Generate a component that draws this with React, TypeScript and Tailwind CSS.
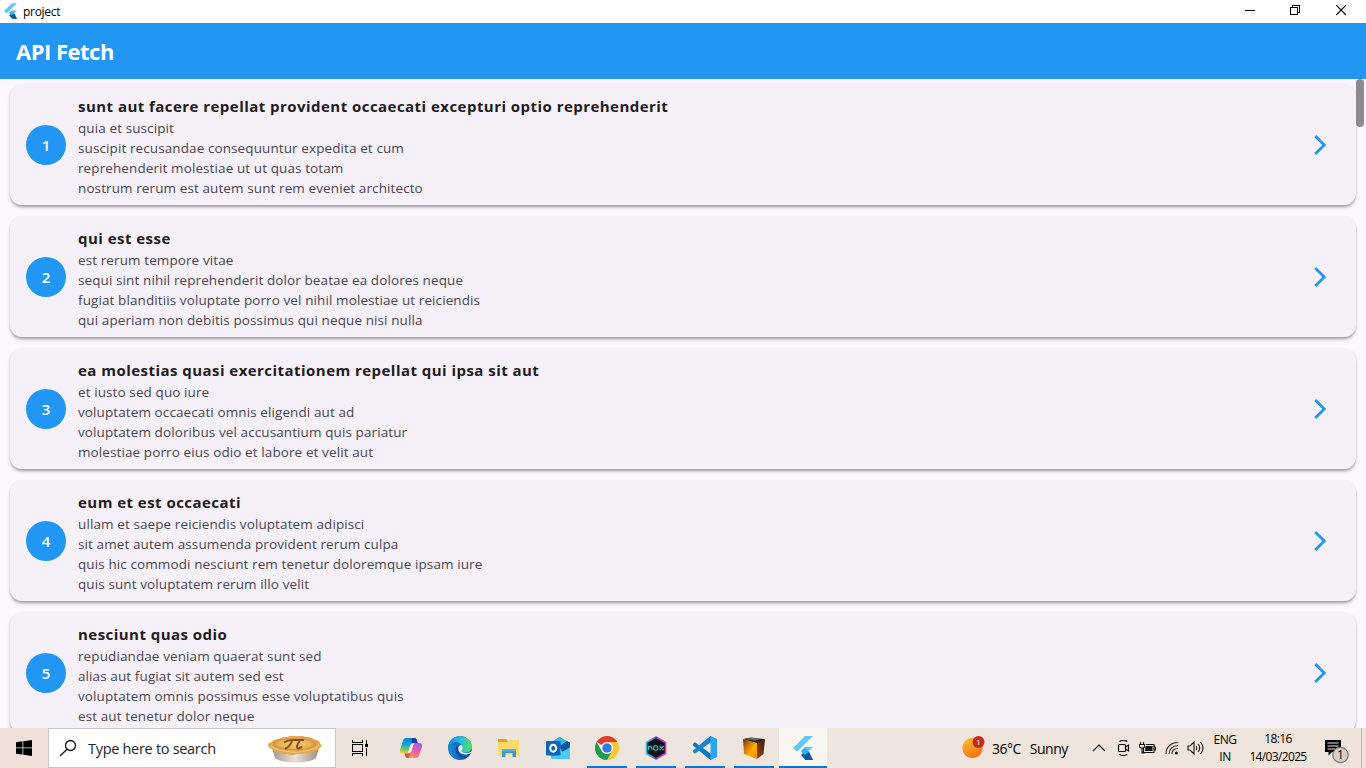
import type { ReactNode } from "react";

const posts = [
  {
    title: "sunt aut facere repellat provident occaecati excepturi optio reprehenderit",
    body: [
      "quia et suscipit",
      "suscipit recusandae consequuntur expedita et cum",
      "reprehenderit molestiae ut ut quas totam",
      "nostrum rerum est autem sunt rem eveniet architecto",
    ],
  },
  {
    title: "qui est esse",
    body: [
      "est rerum tempore vitae",
      "sequi sint nihil reprehenderit dolor beatae ea dolores neque",
      "fugiat blanditiis voluptate porro vel nihil molestiae ut reiciendis",
      "qui aperiam non debitis possimus qui neque nisi nulla",
    ],
  },
  {
    title: "ea molestias quasi exercitationem repellat qui ipsa sit aut",
    body: [
      "et iusto sed quo iure",
      "voluptatem occaecati omnis eligendi aut ad",
      "voluptatem doloribus vel accusantium quis pariatur",
      "molestiae porro eius odio et labore et velit aut",
    ],
  },
  {
    title: "eum et est occaecati",
    body: [
      "ullam et saepe reiciendis voluptatem adipisci",
      "sit amet autem assumenda provident rerum culpa",
      "quis hic commodi nesciunt rem tenetur doloremque ipsam iure",
      "quis sunt voluptatem rerum illo velit",
    ],
  },
  {
    title: "nesciunt quas odio",
    body: [
      "repudiandae veniam quaerat sunt sed",
      "alias aut fugiat sit autem sed est",
      "voluptatem omnis possimus esse voluptatibus quis",
      "est aut tenetur dolor neque",
    ],
  },
];

function FlutterLogo({ className }: { className: string }) {
  return (
    <svg viewBox="0 0 20 24" className={className}>
      <path d="M12.2 0H20L4 15.8 0 12z" fill="#5fc9f8" />
      <path d="M12.2 11.1H20L11.9 19.1 8 15.2z" fill="#5fc9f8" />
      <path d="M11.9 19.1l3.9-3.9L20 24h-3.2z" fill="#01579b" />
      <path d="M8 19l3.9-3.8L20 24h-7.5z" fill="#075b9d" />
      <path d="M8 15.2l3.9-3.9 3.9 3.9-3.9 3.9z" fill="#39b0ee" />
    </svg>
  );
}

function TitleBar() {
  return (
    <header className="flex h-[23px] shrink-0 items-center bg-white text-black">
      <FlutterLogo className="-mt-px ml-[4px] h-[16px] w-[13px]" />
      <span className="ml-[6px] text-[12px] leading-none tracking-[-0.3px]">project</span>
      <div className="ml-auto flex h-full items-start">
        <svg viewBox="0 0 46 22" className="h-[22px] w-[46px]" shapeRendering="crispEdges">
          <path d="M18 10.500h10" stroke="#000" />
        </svg>
        <svg viewBox="0 0 46 22" className="h-[22px] w-[46px]" shapeRendering="crispEdges" fill="none" stroke="#000">
          <path d="M17.500 7.500h7v7h-7zM19.500 7.500v-2h7v7h-2" />
        </svg>
        <svg viewBox="0 0 46 22" className="h-[22px] w-[46px]" fill="none" stroke="#000" strokeWidth="1.100">
          <path d="M17.200 5.200l9.800 9.800M27 5.200l-9.800 9.800" />
        </svg>
        <div className="w-px" />
      </div>
    </header>
  );
}

function PostCard({ index, title, body }: { index: number; title: string; body: string[] }) {
  return (
    <article className="flex h-[121px] shrink-0 items-center rounded-xl bg-[#f6f1f9] pl-4 pr-[24px] shadow-[0_3px_4px_-1px_rgba(0,0,0,0.26),0_1.500px_2px_rgba(0,0,0,0.16)]">
      <div className="flex size-10 shrink-0 items-center justify-center rounded-full bg-[#2196f3] pt-[2px] text-[15px] font-semibold text-white">
        {index}
      </div>
      <div className="-mt-px ml-3 self-start whitespace-nowrap pt-[11px]">
        <h2 className="text-[15px] font-bold leading-6 tracking-[0.460px] text-[#1d1b20]">{title}</h2>
        {body.map((line) => (
          <p key={line} className="text-[13.500px] leading-5 tracking-[0.100px] text-[#49454f]">
            {line}
          </p>
        ))}
      </div>
      <svg viewBox="0 0 24 24" className="ml-auto size-6" fill="none" stroke="#2196f3" strokeWidth="2.800">
        <path d="M7.200 2.900l9.100 9.100-9.100 9.100" />
      </svg>
    </article>
  );
}

function TaskButton({ children, running, active }: { children: ReactNode; running?: boolean; active?: boolean }) {
  return (
    <div className={active ? "flex w-[48px] flex-col bg-[#f9f5f1]" : "flex w-[49px] flex-col"}>
      <div className="flex flex-1 items-center justify-center pt-[2px]">{children}</div>
      <div className={active ? "h-[2px] bg-[#0078d7]" : running ? "mx-auto h-[2px] w-10 bg-[#0078d7]" : "h-[2px]"} />
    </div>
  );
}

function PieIcon() {
  return (
    <svg viewBox="0 0 56 30" className="mt-[2px] h-[30px] w-[56px]">
      <defs>
        <linearGradient id="tin" x1="0" x2="1">
          <stop offset="0" stopColor="#a69a86" />
          <stop offset=".5" stopColor="#e8e1d4" />
          <stop offset="1" stopColor="#9a917f" />
        </linearGradient>
        <radialGradient id="crust">
          <stop offset="0" stopColor="#f3c774" />
          <stop offset=".75" stopColor="#eab55c" />
          <stop offset="1" stopColor="#cf8a35" />
        </radialGradient>
      </defs>
      <path d="M5 14l3 10c6 6 35 6 41 0l3-10z" fill="url(#tin)" />
      <g transform="matrix(1 0 0 .8 0 1.500)">
        <path d="M1 12c0-2 1-3 4-4 1-3 4-3 7-4 3-2 5-2 8-2 3-2 7-2 10-1 4-1 7 0 10 1 4 0 6 2 8 3 4 1 5 3 5 5 2 2 2 4 0 5-1 2-2 4-5 4-2 3-5 3-8 3-4 2-7 1-10 1-4 2-7 1-9 0-5 1-7-1-9-2-4 0-6-2-7-4-3-1-4-3-4-5z" fill="#e3a64d" />
        <ellipse cx="27.500" cy="10.500" rx="21.500" ry="7.500" fill="url(#crust)" />
        <path d="M4 13c2 3 4 2 6 4 3 3 6 1 9 3 4 1 7 0 10 1 5-1 7 0 10-2 4 0 5-2 8-3 3-1 4-3 5-4" fill="none" stroke="#f3cb80" strokeWidth="1.200" />
      </g>
      <path d="M17 8.500c4-3 6-2.500 10-2.500h10M25 7c-1 3-3 6-7 8M33 6.500c-3 4-4 7-2 8 2 0 3-1 4-2" fill="none" stroke="#895019" strokeWidth="2" />
    </svg>
  );
}

function CopilotIcon() {
  return (
    <svg viewBox="0 0 24 24" className="size-6">
      <defs>
        <linearGradient id="cpA" x1=".5" x2=".3" y1="0" y2="1">
          <stop offset="0" stopColor="#087fdb" />
          <stop offset=".45" stopColor="#13a6d9" />
          <stop offset=".75" stopColor="#7cca59" />
          <stop offset="1" stopColor="#f5ce22" />
        </linearGradient>
        <linearGradient id="cpB" x1=".7" x2=".3" y1="0" y2="1">
          <stop offset="0" stopColor="#a45cf0" />
          <stop offset=".5" stopColor="#ec5b9f" />
          <stop offset="1" stopColor="#ff9b52" />
        </linearGradient>
      </defs>
      <path d="M7 2h8c2 0 2.500 1 3 3l.6 2h-4c-2 0-2.700.7-3.200 2.300L9.700 15c-.6 2-1.500 2.500-3.500 2.500H4c-3 0-3.500-2-2.800-4.500L4 4.500C4.500 3 5.200 2 7 2z" fill="url(#cpA)" />
      <path d="M17 22H9c-2 0-2.500-1-3-3l-.5-1.500h3.500c2 0 2.800-.7 3.300-2.300L14 9.500c.6-2 1.500-2.500 3.500-2.500H20c3 0 3.500 2 2.800 4.500L20 19.500c-.5 1.500-1.200 2.500-3 2.500z" fill="url(#cpB)" />
      <path d="M13 2h2c2 0 2.500 1 3 3l.6 2h-4c-1 0-1.500.2-2 .6z" fill="#153ea8" />
      <path d="M5.500 17.500H9c1 0 1.700-.2 2.300-.7L9.800 22H9c-2 0-2.500-1-3-3z" fill="#e0523c" />
      <path d="M11.300 9L14.700 7.200 12.400 15.300 9 17.300z" fill="#f8eee5" />
    </svg>
  );
}

function EdgeIcon() {
  return (
    <svg viewBox="0 0 24 24" className="size-6">
      <defs>
        <linearGradient id="edA" x1="0" x2="1" y1=".3" y2=".4">
          <stop offset="0" stopColor="#1783d4" />
          <stop offset=".5" stopColor="#27bce0" />
          <stop offset="1" stopColor="#5cdc68" />
        </linearGradient>
        <linearGradient id="edB" x1="0" x2="1">
          <stop offset="0" stopColor="#1688d9" />
          <stop offset="1" stopColor="#0c4f9f" />
        </linearGradient>
      </defs>
      <circle cx="12" cy="12" r="12" fill="url(#edB)" />
      <path d="M8.500 10.500C6 14 8.500 20.500 14 21.700c3 .6 5.500-.4 7.500-2.200-3 1.300-8 .8-10.500-2.500-1.700-2.300-1.500-4.800-.5-6.800z" fill="#0b4a98" />
      <path d="M11 10c-1.500 2.500-.6 6 2.400 7.600 3.200 1.600 6.500 1 9.300-.6L25 13c-1 3-4 4-6.500 4-3 0-4.200-1.100-4.200-1.900 0-.6 1.200-1.200 1.200-3.200 0-1.400-.8-2.700-1.900-3.400z" fill="#f1ece7" />
      <path d="M0 11.500C.5 5 5.500 0 12 0c7 0 12 5 12 10.600 0 4-3 6-6.500 6-3 0-4.200-.9-4.200-1.700 0-.6 1.200-1.200 1.200-3C14.500 8.700 11.500 6 8 6c-4 0-7.200 2.500-8 5.500z" fill="url(#edA)" />
    </svg>
  );
}

function ExplorerIcon() {
  return (
    <svg viewBox="0 0 22 20" className="h-[20px] w-[22px]">
      <path d="M0 1h8l2 2v3H0z" fill="#e2a21a" />
      <path d="M0 4h9l2-2h10v15H0z" fill="#ffd86b" />
      <path d="M4 19v-8h14v8h-3.500v-4h-7v4z" fill="#3c93d5" />
      <path d="M4 11h14v2.500H4z" fill="#55b1e8" />
    </svg>
  );
}

function OutlookIcon() {
  return (
    <svg viewBox="0 0 24 24" className="size-6">
      <path d="M4 7l9.500-6L24 7v4H4z" fill="#1591df" />
      <path d="M8 5l5.500-4L21 5.500V13H8z" fill="#38b5ee" />
      <path d="M14 10l7-5 3 2v5l-8 5z" fill="#10569f" />
      <path d="M5 13l10 4 9-6v10q0 2-2 2H7q-2 0-2-2z" fill="#25a6e6" />
      <path d="M5 21l19-9v9q0 2-2 2H7q-2 0-2-2z" fill="#4bcaf5" />
      <rect y="5" width="14.500" height="14.500" rx="1" fill="#0b65bd" />
      <ellipse cx="7.200" cy="12.200" rx="3" ry="3.500" fill="none" stroke="#fff" strokeWidth="2" />
    </svg>
  );
}

function ChromeIcon() {
  return (
    <svg viewBox="0 0 24 24" className="size-6">
      <path d="M12 12L1.600 6A12 12 0 0 1 22.400 6z" fill="#e33b2e" />
      <path d="M12 6h10.400A12 12 0 0 1 12 24l5.200-9z" fill="#fcc934" />
      <path d="M6.800 15L1.600 6A12 12 0 0 0 12 24l5.200-9z" fill="#219a4b" />
      <circle cx="12" cy="12" r="6" fill="#fff" />
      <circle cx="12" cy="12" r="4.700" fill="#3278e8" />
    </svg>
  );
}

function NoxIcon() {
  return (
    <svg viewBox="0 0 24 24" className="size-6">
      <defs>
        <linearGradient id="nox">
          <stop offset="0" stopColor="#20c6da" />
          <stop offset=".5" stopColor="#7650da" />
          <stop offset="1" stopColor="#f02ba7" />
        </linearGradient>
      </defs>
      <path d="M12 1l9.500 5.500v11L12 23l-9.500-5.500v-11z" fill="#14131b" stroke="url(#nox)" strokeWidth="1.600" strokeLinejoin="round" />
      <path d="M4.500 14v-3.500h2.200q1 0 1 1V14M15.600 10l4 4M19.600 10l-4 4" fill="none" stroke="#24cfc7" strokeWidth="1.100" />
      <circle cx="11.700" cy="12" r="2.200" fill="none" stroke="#24cfc7" strokeWidth="1.100" />
    </svg>
  );
}

function CodeIcon() {
  return (
    <svg viewBox="0 0 24 24" className="size-6">
      <path d="M0 8l2-1.700L18 18v6h-.7L0 9.500z" fill="#0875bd" />
      <path d="M0 16l2 1.700L18 6V0h-.7L0 14.500z" fill="#1385cf" />
      <path d="M17.500 0L24 3v18l-6.500 3z" fill="#29a4f0" />
    </svg>
  );
}

function CubeIcon() {
  return (
    <svg viewBox="0 0 22 22" className="size-[22px]">
      <defs>
        <linearGradient id="cube" x1="0" x2="1" y1="0" y2="1">
          <stop offset="0" stopColor="#56300e" />
          <stop offset=".25" stopColor="#b86508" />
          <stop offset=".6" stopColor="#ffae00" />
          <stop offset="1" stopColor="#ee8a00" />
        </linearGradient>
        <linearGradient id="cubeSide" x1="1" x2="0" y1="0" y2="1">
          <stop offset="0" stopColor="#34180d" />
          <stop offset="1" stopColor="#a04a08" />
        </linearGradient>
      </defs>
      <path d="M0 2l8-1.500L22 2l-8 5z" fill="#23201d" />
      <path d="M0 2l14 4v16L1 17z" fill="url(#cube)" />
      <path d="M14 6l8-4-1.500 15L14 22z" fill="url(#cubeSide)" />
      <path d="M2 2l7-1 9 1-5 1.500z" fill="#73706a" />
    </svg>
  );
}

function Taskbar() {
  return (
    <footer className="flex h-10 shrink-0 bg-linear-to-r from-[#efe1d8] via-[#ede5df] to-[#f0e4da] text-black">
      <div className="flex w-12 items-center justify-center">
        <svg viewBox="0 0 16 16" className="size-4">
          <path d="M0 2.200L6.500 1.300v6.200H0zM7.300 1.200L16 0v7.500H7.300zM0 8.300h6.500v6.300L0 13.700zM7.300 8.300H16V16l-8.700-1.200z" />
        </svg>
      </div>
      <div className="flex w-[288px] items-center border border-[#c8c8c8] bg-white">
        <svg viewBox="0 0 18 18" className="ml-[10px] size-[18px]" fill="none" stroke="#111" strokeWidth="1.300">
          <circle cx="11.500" cy="6.500" r="5" />
          <path d="M8 10.200L1 17" />
        </svg>
        <span className="ml-[11px] pt-[2px] text-[14.500px] leading-none tracking-[-0.300px] text-[#262626]">Type here to search</span>
        <div className="ml-auto mr-[12px]">
          <PieIcon />
        </div>
      </div>
      <div className="flex w-[48px] items-center justify-center">
        <svg viewBox="0 0 17 16" className="h-[16px] w-[17px]" shapeRendering="crispEdges" fill="none" stroke="#000">
          <path d="M.5 0v2.500h10V0M.5 16v-2.500h10V16M.5 4.500h10v7H.5zM14.500 0v4M14.500 8v8" />
          <path d="M13 4h3v3h-3z" fill="#000" stroke="none" />
        </svg>
      </div>
      <div className="ml-[2px] flex">
        <TaskButton><CopilotIcon /></TaskButton>
        <TaskButton><EdgeIcon /></TaskButton>
        <TaskButton><ExplorerIcon /></TaskButton>
        <TaskButton><OutlookIcon /></TaskButton>
        <TaskButton running><ChromeIcon /></TaskButton>
        <TaskButton running><NoxIcon /></TaskButton>
        <TaskButton running><CodeIcon /></TaskButton>
        <TaskButton running><CubeIcon /></TaskButton>
        <div className="ml-px flex">
          <TaskButton active><FlutterLogo className="h-6 w-5" /></TaskButton>
        </div>
      </div>
      <div className="ml-auto flex items-center">
        <svg viewBox="0 0 24 24" className="size-6">
          <defs>
            <linearGradient id="sun" x1=".3" x2=".7" y1="0" y2="1">
              <stop offset="0" stopColor="#f9bc34" />
              <stop offset="1" stopColor="#f26e12" />
            </linearGradient>
          </defs>
          <circle cx="11.500" cy="12" r="10.200" fill="url(#sun)" />
          <circle cx="17.500" cy="6" r="6" fill="#c42b1c" />
          <text x="17.500" y="9" fill="#fff" fontSize="8" textAnchor="middle">1</text>
        </svg>
        <div className="ml-[7px] flex w-[97px] gap-[9px] whitespace-nowrap pt-px text-[14px] leading-none tracking-[-0.500px]">
          <span>36°C</span>
          <span>Sunny</span>
        </div>
        <svg viewBox="0 0 14 8" className="ml-[3px] h-[8px] w-[14px]" fill="none" stroke="#111" strokeWidth="1.200">
          <path d="M1 7l6-6 6 6" />
        </svg>
        <svg viewBox="0 0 13 16" className="ml-[11px] h-[16px] w-[13px]" fill="none" stroke="#111" strokeWidth="1.200">
          <rect x="1.500" y="4.500" width="7" height="7" rx="1" />
          <path d="M8.500 7L11.500 5v6L8.500 9M2.500 1.500q4-2 8 0M2.500 14.500q4 2 8 0" />
        </svg>
        <svg viewBox="0 0 17 13" className="ml-[9px] h-[13px] w-[17px]" fill="none" stroke="#111" strokeWidth="1.100">
          <path d="M1.500 0v2M4.500 0v2M.5 2.500h5v2q0 1.500-2.500 1.500T.5 4.500zM3 6v5h2.500M7 2.500h8v8H4.500V6M15 5h1.500v3H15" />
          <path d="M6.500 4h7v5H6z" fill="#111" stroke="none" />
        </svg>
        <svg viewBox="0 0 14 14" className="ml-[9px] size-[14px]" fill="none" stroke="#222" strokeWidth="1.100">
          <path d="M1 13C1 6 6 1.500 13 1.500M4 13c0-5 4-8.500 9-8.500M7 13c0-3.500 2.500-5.500 6-5.500" />
          <circle cx="11.300" cy="12" r="1.500" fill="#111" stroke="none" />
        </svg>
        <svg viewBox="0 0 17 14" className="ml-[8px] h-[14px] w-[17px]" fill="none" stroke="#111" strokeWidth="1.100">
          <path d="M1 5h2l4-4v12L3 9H1zM9 5q1.500 2 0 4M11 3q3.500 4 0 8M13.500 1q5 6 0 12" />
        </svg>
        <div className="ml-[4px] flex w-[34px] flex-col items-center text-[12px] leading-[17px] tracking-[-0.500px]">
          <span>ENG</span>
          <span>IN</span>
        </div>
        <div className="ml-[3px] flex w-[66px] flex-col items-center whitespace-nowrap text-[12px] leading-[18px] tracking-[-0.650px]">
          <span>18:16</span>
          <span>14/03/2025</span>
        </div>
        <svg viewBox="0 0 26 26" className="ml-[12px] mt-[5px] size-[26px]">
          <path d="M2 2h16v12H9l-3.500 3.500V14H2z" fill="#000" />
          <path d="M4.500 5h11M4.500 8h11M4.500 11h8" stroke="#eee5df" strokeWidth="1.200" />
          <circle cx="17.500" cy="17" r="7.700" fill="#d4cfca" stroke="#777" strokeWidth="1.200" />
          <text x="17.500" y="21" textAnchor="middle" fontSize="12">1</text>
        </svg>
        <div className="ml-[12px] mr-[4px] h-10 w-px bg-[#b9b1aa]" />
      </div>
    </footer>
  );
}

export default function App() {
  return (
    <div className="flex h-screen w-screen flex-col overflow-hidden bg-[#fef7ff] font-['Open_Sans','Noto_Sans',sans-serif]">
      <TitleBar />
      <div className="flex h-14 shrink-0 items-center bg-[#2196f3] px-4">
        <h1 className="text-[22px] font-bold leading-none tracking-[-0.500px] text-white">API Fetch</h1>
      </div>
      <main className="relative min-h-0 flex-1 overflow-hidden px-[10px] pt-[5px]">
        <div className="flex flex-col gap-[11px]">
          {posts.map((post, i) => (
            <PostCard key={post.title} index={i + 1} title={post.title} body={post.body} />
          ))}
        </div>
        <div className="absolute right-[2px] top-0 h-12 w-2 rounded-full bg-[#8f898f]" />
      </main>
      <Taskbar />
    </div>
  );
}
